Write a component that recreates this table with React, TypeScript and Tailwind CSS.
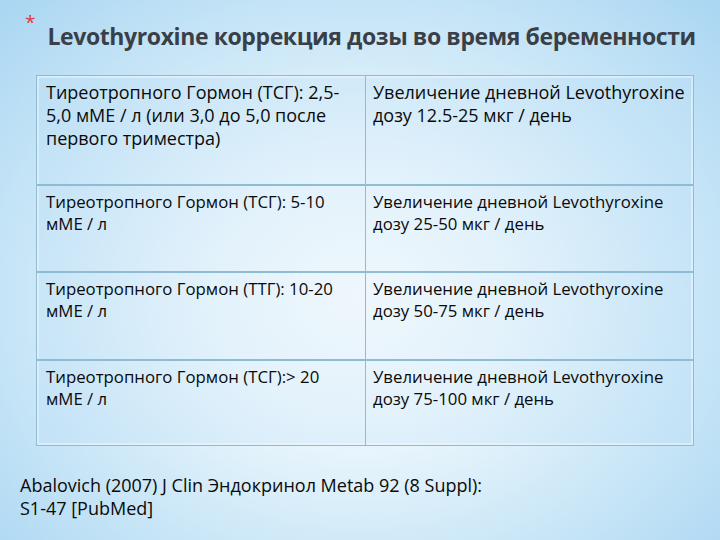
import React from "react";

const rows: { a: string[]; b: string[]; h: string; big?: boolean }[] = [
  {
    a: ["Тиреотропного Гормон (ТСГ): 2,5-", "5,0 мМЕ / л (или 3,0 до 5,0 после", "первого триместра)"],
    b: ["Увеличение дневной Levothyroxine", "дозу 12.5-25 мкг / день"],
    h: "h-[108px]",
    big: true,
  },
  {
    a: ["Тиреотропного Гормон (ТСГ): 5-10", "мМЕ / л"],
    b: ["Увеличение дневной Levothyroxine", "дозу 25-50 мкг / день"],
    h: "h-[87px]",
  },
  {
    a: ["Тиреотропного Гормон (ТТГ): 10-20", "мМЕ / л"],
    b: ["Увеличение дневной Levothyroxine", "дозу 50-75 мкг / день"],
    h: "h-[88px]",
  },
  {
    a: ["Тиреотропного Гормон (ТСГ):> 20", "мМЕ / л"],
    b: ["Увеличение дневной Levothyroxine", "дозу 75-100 мкг / день"],
    h: "h-[86px]",
  },
];

function Lines({ lines }: { lines: string[] }) {
  return (
    <>
      {lines.map((l, i) => (
        <div key={i} className="whitespace-nowrap">
          {l}
        </div>
      ))}
    </>
  );
}

export default function App() {
  return (
    <div
      className="w-[720px] h-[540px] overflow-hidden relative bg-[radial-gradient(ellipse_at_50%_55%,#ffffff_0%,#eef8fd_30%,#cfe9f8_60%,#a9d6f2_100%)] text-[#0a0a0a]"
      style={{ fontFamily: '"Open Sans", "DejaVu Sans", sans-serif' }}
    >
      <div className="flex items-start pl-[25px] pt-[13px] h-[75px]">
        <span className="text-[#e23a3a] text-[19px] leading-none font-normal mr-[12px]">*</span>
        <h1 className="text-[#3a3f47] text-[23px] font-bold leading-none mt-[12px] tracking-[-0.4px] whitespace-nowrap">
          Levothyroxine коррекция дозы во время беременности
        </h1>
      </div>
      <div className="ml-[36px] w-[658px] border border-[#8fbcd2] shadow-[inset_0_0_0_2px_rgba(255,255,255,0.5)]">
        {rows.map((r, i) => (
          <div
            key={i}
            className={`grid grid-cols-[329px_1fr] ${r.h} ${i > 0 ? "border-t-2 border-[#8fbcd2]" : ""} bg-[rgba(190,225,248,0.25)]`}
          >
            <div
              className={`border-r border-[#8fbcd2] pl-[9px] pt-[5px] ${r.big ? "text-[18px] leading-[23px]" : "text-[16.8px] leading-[22px]"}`}
            >
              <Lines lines={r.a} />
            </div>
            <div className={`pl-[7px] pt-[5px] ${r.big ? "text-[18px] leading-[23px]" : "text-[16.8px] leading-[22px]"}`}>
              <Lines lines={r.b} />
            </div>
          </div>
        ))}
      </div>
      <div className="pl-[20px] pt-[28px] text-[18px] leading-[23px]">
        <div className="whitespace-nowrap">Abalovich (2007) J Clin Эндокринол Metab 92 (8 Suppl):</div>
        <div className="whitespace-nowrap">S1-47 [PubMed]</div>
      </div>
    </div>
  );
}
